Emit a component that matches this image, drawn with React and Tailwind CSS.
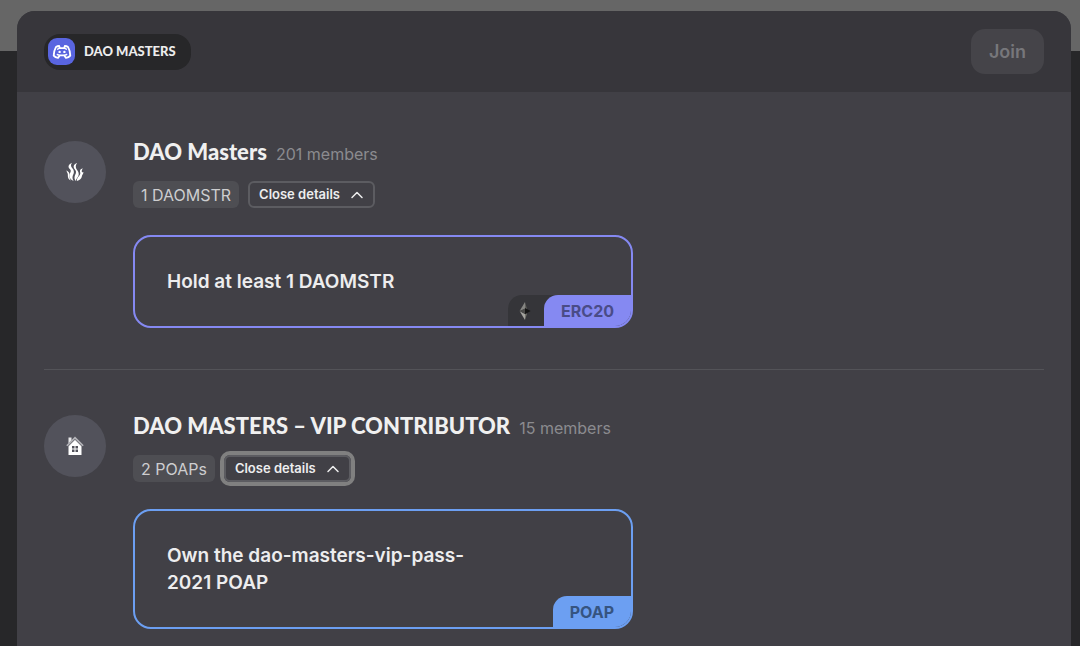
import React from "react";
import { ChevronUp } from "lucide-react";

function CommunityIcon() {
  return (
    <svg viewBox="0 0 20 20" className="h-5 w-5" fill="none" stroke="white" strokeWidth="1.8" strokeLinecap="round" strokeLinejoin="round" aria-hidden="true">
      <path d="M7.8 6.2 7.2 4C5.7 4 4.7 4.4 4 4.9 2.6 7.4 1.8 10.4 1.7 13.6c1.1 1.4 2.5 2.1 4.3 2.3l1.7-2.5h4.6l1.7 2.5c1.8-.2 3.2-.9 4.3-2.3-.1-3.2-.9-6.2-2.3-8.7-.7-.5-1.7-.9-3.2-.9l-.6 2.2z" />
      <path d="m5.6 7.2 2.2-1M14.4 7.2l-2.2-1M5.3 12.5l2.4.9M14.7 12.5l-2.4.9" strokeWidth="1.4" />
      <circle cx="7.6" cy="9.9" r="1.2" fill="white" stroke="none" />
      <circle cx="12.4" cy="9.9" r="1.2" fill="white" stroke="none" />
    </svg>
  );
}

function FlameIcon() {
  return (
    <svg viewBox="0 0 18 20" className="h-5 w-[18px]" fill="white" aria-hidden="true">
      <path d="M6 .8C3.4 2 2.2 3.7 2.6 5.2c.4 1.6 2.1 2 2.2 3.5.1 1.6-1.4 2.5-1.3 5 .1 2.4 1.5 4.3 4.1 5.2-1-1.7-1.4-3.3-.9-4.9.5-1.7 1.5-2.8 1.1-5-.3-2-2.2-2.8-2.6-4.4C4.8 3.200 5.100 2 6 .8z" />
      <path d="M11.2.8C8.600 2 7.300 3.700 7.700 5.300c.4 1.800 2.100 2.500 2.300 4.400.2 2-1.500 3.600-1.500 5.700 0 1.500.5 2.700 1.300 3.600 0-2.200 2.500-3.700 2.900-6.300.5-3-2-4.500-2.700-6.700C9.500 4.200 10 2.300 11.200.8z" />
      <path d="M.6 8.300c-.2 1.700 1 2.100 1.200 3.700.2 2-.5 4.800 2.900 6.500-1.700-2.900-.9-4.400-1.200-6.500C3.200 9.800 1.400 9.500.6 8.300z" />
      <path d="M16.800 6.200c-2.500.7-3.300 2.200-2.700 3.900.7 2-.3 3.100-1.500 4.500-1.100 1.300-1.800 2.800-1.800 4.400 2.900-.5 4.700-2.200 5.100-4.700.3-1.800 1.600-2.300 1.500-4.500-.5.600-1.200.7-1.500.2-.5-1.200.2-2.500.9-3.800z" />
    </svg>
  );
}

function HouseIcon() {
  return (
    <svg viewBox="0 0 18 20" className="h-5 w-[18px]" aria-hidden="true">
      <path d="M2.500 1.500h3v3l-3 3z" fill="#e8e8ea" />
      <path d="M9 3.500 15.500 10v9h-13v-9z" fill="white" />
      <path d="M.8 9.800 9 1.600l8.200 8.200" fill="none" stroke="#b5b5ba" strokeWidth="1.5" />
      <path d="M2 10.500 9 3.600l7 6.900" fill="none" stroke="#89898f" strokeWidth=".7" />
      <path d="M6 10h2.500v2.500H6zM9.500 10H12v2.500H9.500zM6 13.500h2.500V16H6zM9.500 13.500H12V16H9.500z" fill="#52525b" />
    </svg>
  );
}

function ChainIcon() {
  return (
    <svg viewBox="0 0 12 18" className="h-[18px] w-3" aria-hidden="true">
      <path d="M6 0v7L.6 9z" fill="#858582" />
      <path d="M6 18v-6L.6 9z" fill="#a3a29d" />
      <path d="M6 6.500V12L.6 9z" fill="#4a4a48" />
      <path d="M6 0l2 7-2 1z" fill="#62625e" />
      <path d="M6 18l2-6.500-2-1z" fill="#77776f" />
      <path d="M6 6l5.600 3L6 12.200z" fill="#151515" />
    </svg>
  );
}

const roles = [
  {
    id: "dao-masters",
    name: "DAO Masters",
    members: "201 members",
    requirement: "1 DAOMSTR",
    detail: "Hold at least 1 DAOMSTR",
    type: "ERC20",
    chain: true,
    focused: false,
    border: "border-[#8589f2]",
    badge: "bg-[#8589f2] text-[#4a4c87]",
    Icon: FlameIcon,
  },
  {
    id: "vip-contributor",
    name: "DAO MASTERS – VIP CONTRIBUTOR",
    members: "15 members",
    requirement: "2 POAPs",
    detail: "Own the dao-masters-vip-pass-2021 POAP",
    type: "POAP",
    chain: false,
    focused: true,
    border: "border-[#6c9ff2]",
    badge: "bg-[#6c9ff2] text-[#365480]",
    Icon: HouseIcon,
  },
];

function Role({ role }) {
  const { Icon } = role;
  return (
    <section className="flex gap-[27px] border-b border-[#535358] pt-10 pb-[41px] last:border-b-0">
      <div className="mt-[5px] flex h-[62px] w-[62px] shrink-0 items-center justify-center rounded-full bg-[#52525b]">
        <Icon />
      </div>
      <div className="min-w-0 flex-1">
        <div className="flex h-8 items-baseline gap-[9px] whitespace-nowrap">
          <h2 className="font-['Lato','Inter',sans-serif] text-[22px] leading-8 font-black text-[#f0f0f0]">{role.name}</h2>
          <span className="text-base text-[#8b8b8f]">{role.members}</span>
        </div>
        <div className="mt-[13px] flex items-center gap-[9px]">
          <span className="flex h-[27px] items-center rounded-md bg-[#4e4e53] px-2 text-base text-[#cdcdcf]">{role.requirement}</span>
          <button
            type="button"
            aria-expanded="true"
            aria-controls={role.id}
            className={
              "flex h-[27px] items-center gap-[7px] rounded-md border-2 border-[#5c5c61] pr-1.5 pl-[9px] text-[13px] font-semibold text-[#ededee] outline-none " +
              (role.focused ? "ring-4 ring-[#808080]" : "")
            }
          >
            Close details
            <ChevronUp className="h-5 w-5" strokeWidth={1.8} aria-hidden="true" />
          </button>
        </div>
        <div id={role.id} className={"relative mt-[27px] max-w-[500px] overflow-hidden rounded-[18px] border-2 px-8 py-[31px] " + role.border}>
          <p className="max-w-80 text-[19px] leading-[27px] font-semibold text-[#ededee]">{role.detail}</p>
          <div className="absolute right-0 bottom-0 flex">
            {role.chain && (
              <span className="-mr-4 flex h-[31px] w-[52px] items-center rounded-tl-[14px] bg-[#353539] pl-[11px]">
                <ChainIcon />
              </span>
            )}
            <span className={"relative flex h-[31px] items-center rounded-tl-[14px] px-[17px] text-base font-bold " + role.badge}>{role.type}</span>
          </div>
        </div>
      </div>
    </section>
  );
}

export default function App() {
  return (
    <div className="h-screen overflow-hidden bg-[linear-gradient(#666666_51px,#272729_51px)] pt-[11px] pr-[9px] pl-[17px] font-['Inter',sans-serif]">
      <main className="min-h-full overflow-hidden rounded-t-[18px] bg-[#414046]">
        <header className="flex h-[81px] items-center justify-between bg-[#37363b] px-[27px]">
          <div className="flex h-9 items-center gap-[9px] rounded-2xl bg-[#272729] pr-[15px] pl-1">
            <span className="flex h-[27px] w-[27px] items-center justify-center rounded-[9px] bg-[#5965e0]">
              <CommunityIcon />
            </span>
            <span className="font-['Lato','Inter',sans-serif] text-[13px] font-black text-[#ededed]">DAO MASTERS</span>
          </div>
          <button type="button" disabled className="h-[45px] rounded-[14px] bg-[#454449] px-[18px] text-lg font-semibold text-[#77777b]">
            Join
          </button>
        </header>
        <div className="px-[27px] pt-1">
          {roles.map((role) => (
            <Role key={role.id} role={role} />
          ))}
        </div>
      </main>
    </div>
  );
}
